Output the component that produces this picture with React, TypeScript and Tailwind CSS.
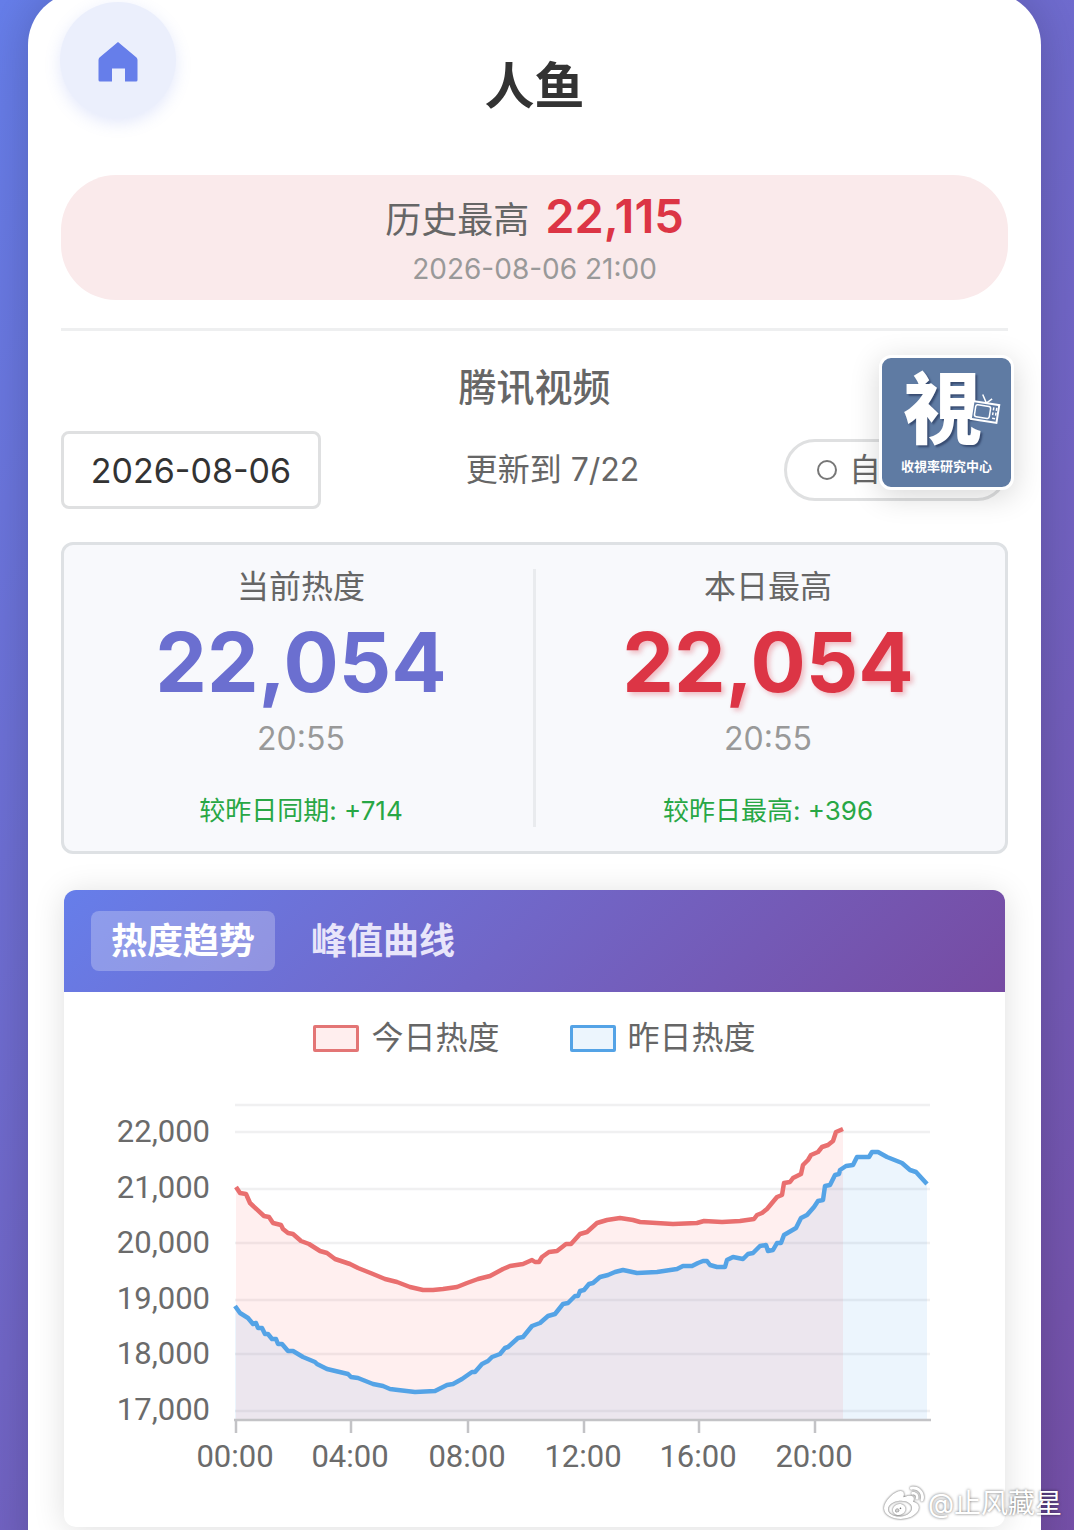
import { useState } from "react";
import { FaWeibo } from "react-icons/fa";

type Point = [number, number];

const today: Point[] = [
  [236, 1187], [240, 1193], [246, 1194], [250, 1203], [264, 1216], [269, 1217], [273, 1223], [281, 1225],
  [283, 1229], [288, 1233], [293, 1234], [301, 1241], [309, 1244], [320, 1251], [327, 1253], [335, 1259],
  [350, 1264], [358, 1268], [373, 1274], [385, 1279], [397, 1282], [410, 1287], [423, 1290], [433, 1290],
  [443, 1289], [457, 1287], [467, 1283], [478, 1279], [490, 1276], [503, 1269], [510, 1266], [523, 1264],
  [532, 1260], [535, 1262], [539, 1262], [542, 1257], [549, 1252], [557, 1251], [566, 1244], [571, 1244],
  [580, 1234], [587, 1232], [597, 1223], [607, 1220], [620, 1218], [633, 1220], [640, 1222], [673, 1224],
  [697, 1223], [704, 1221], [722, 1222], [740, 1221], [754, 1219], [757, 1215], [762, 1213], [767, 1209],
  [777, 1197], [782, 1195], [784, 1183], [790, 1182], [793, 1178], [801, 1174], [803, 1165], [808, 1160],
  [811, 1155], [818, 1152], [822, 1147], [828, 1145], [833, 1141], [836, 1132], [843, 1129],
];

const yesterday: Point[] = [
  [235, 1306], [240, 1313], [248, 1318], [253, 1324], [256, 1323], [258, 1328], [262, 1328], [265, 1334],
  [268, 1334], [272, 1339], [276, 1339], [278, 1344], [282, 1344], [288, 1351], [293, 1351], [303, 1357],
  [315, 1362], [317, 1364], [327, 1369], [348, 1374], [351, 1377], [358, 1378], [373, 1384], [383, 1386],
  [390, 1389], [398, 1390], [415, 1392], [435, 1391], [447, 1385], [453, 1384], [462, 1379], [472, 1372],
  [475, 1372], [482, 1364], [488, 1361], [492, 1357], [500, 1354], [505, 1348], [508, 1347], [518, 1338],
  [523, 1337], [532, 1326], [540, 1323], [548, 1316], [555, 1314], [563, 1304], [568, 1303], [575, 1296],
  [578, 1296], [580, 1291], [584, 1290], [589, 1284], [593, 1283], [600, 1277], [608, 1275], [615, 1272],
  [623, 1270], [637, 1273], [657, 1272], [677, 1269], [683, 1266], [692, 1266], [698, 1263], [703, 1261],
  [707, 1261], [710, 1265], [717, 1267], [725, 1267], [727, 1260], [733, 1257], [743, 1259], [748, 1254],
  [753, 1253], [760, 1246], [766, 1245], [768, 1251], [773, 1250], [777, 1243], [781, 1243], [784, 1235],
  [796, 1228], [801, 1218], [807, 1215], [814, 1207], [818, 1201], [823, 1200], [825, 1186], [830, 1185],
  [835, 1175], [839, 1174], [840, 1170], [846, 1166], [853, 1165], [857, 1157], [869, 1157], [872, 1152],
  [878, 1152], [887, 1157], [902, 1163], [910, 1170], [916, 1172], [927, 1184],
];

const yLabels: [string, number][] = [
  ["22,000", 1132],
  ["21,000", 1189],
  ["20,000", 1243],
  ["19,000", 1300],
  ["18,000", 1354],
  ["17,000", 1411],
];

const xLabels: [string, number][] = [
  ["00:00", 235],
  ["04:00", 350],
  ["08:00", 467],
  ["12:00", 583],
  ["16:00", 698],
  ["20:00", 814],
];

const BASE = 1419;
const line = (p: Point[]) => "M" + p.map(([x, y]) => `${x} ${y}`).join("L");
const area = (p: Point[]) => `${line(p)}L${p[p.length - 1][0]} ${BASE}L${p[0][0]} ${BASE}Z`;

function TrendChart() {
  return (
    <svg viewBox="64 1080 941 447" className="block w-full" role="img" aria-label="热度趋势图">
      <g stroke="#f0f0f1" strokeWidth="2.5">
        <path d="M235 1105H930" />
        {yLabels.map(([t, y]) => (
          <path key={t} d={`M235 ${y}H930`} />
        ))}
      </g>
      <path d={area(today)} fill="#ff6b6b" fillOpacity="0.11" />
      <path d={area(yesterday)} fill="#48a0f0" fillOpacity="0.1" />
      <g stroke="#c3c3c6" strokeWidth="2.5">
        <path d="M234 1420H931" />
        {xLabels.map(([t, x]) => (
          <path key={t} d={`M${x + 1} 1419V1433`} />
        ))}
      </g>
      <g fill="none" strokeWidth="4.5" strokeLinejoin="round">
        <path d={line(yesterday)} stroke="#54a3e6" />
        <path d={line(today)} stroke="#e96f6f" />
      </g>
      <g fill="#6b6b6b" fontSize="31" fontFamily="Roboto, sans-serif">
        {yLabels.map(([t, y], i) => (
          <text key={t} x="210" y={1142 + Math.round(i * 55.6)} textAnchor="end">
            {t}
          </text>
        ))}
        {xLabels.map(([t, x]) => (
          <text key={t} x={x} y="1467" textAnchor="middle">
            {t}
          </text>
        ))}
      </g>
    </svg>
  );
}

function Logo() {
  return (
    <a
      href="#center"
      className="absolute top-[355px] right-[60px] flex size-[135px] flex-col items-center overflow-hidden rounded-xl border-3 border-white bg-[#5f7ba3] text-white shadow-[0_6px_30px_rgba(0,0,0,0.16)]"
    >
      <span className="mt-1.5 mr-2 text-[78px] leading-[92px] font-black [text-shadow:2px_2px_2px_rgba(30,45,80,0.6)]">
        視
      </span>
      <span className="text-[13px] leading-5 font-bold">收視率研究中心</span>
      <svg viewBox="0 0 32 32" className="absolute top-9 right-2.5 size-8" fill="none" stroke="#fff" aria-hidden="true">
        <g transform="rotate(9 16 18)">
          <path d="M11 1 16 9 21 4" strokeWidth="1.5" />
          <rect x="3" y="9" width="26" height="18" fill="#5f7ba3" strokeWidth="2" />
          <rect x="6" y="12" width="15" height="12" rx="2" strokeWidth="1.5" />
          <path d="M24 12v3M24 17v3M27 12v3M27 17v3M24 23h3" strokeWidth="1.5" />
        </g>
      </svg>
    </a>
  );
}

function Stat(props: { title: string; value: string; time: string; diff: string; tone: string }) {
  return (
    <div className="flex flex-1 flex-col items-center">
      <h3 className="text-[32px] leading-9 text-[#666]">{props.title}</h3>
      <p className={"mt-4 text-[82px] leading-[84px] font-bold " + props.tone}>{props.value}</p>
      <p className="mt-3.5 text-[32px] leading-10 text-[#999]">{props.time}</p>
      <p className="mt-9 text-[26px] leading-8 text-[#28a745]">{props.diff}</p>
    </div>
  );
}

export default function App() {
  const [date, setDate] = useState("2026-08-06");
  const [auto, setAuto] = useState(false);
  const [tab, setTab] = useState(0);

  return (
    <div className="relative h-screen min-h-[1530px] overflow-hidden bg-linear-135 from-[#667eea] to-[#764ba2] to-110% pr-[33px] pl-7 font-['Inter','Noto_Sans_CJK_SC',sans-serif]">
      <main className="relative -mt-2 min-h-[1600px] rounded-[53px] bg-white px-[33px] shadow-[0_0_50px_rgba(0,0,0,0.2)]">
        <a
          href="#home"
          aria-label="首页"
          className="absolute top-2.5 left-8 flex size-[116px] items-center justify-center rounded-full bg-[#ebeffc] shadow-[0_5px_16px_rgba(102,126,234,0.18)]"
        >
          <svg viewBox="0 0 40 40" className="mt-1 size-10 fill-[#667eea]" aria-hidden="true">
            <path d="M20 0 38.500 15.500Q39.500 16.500 39.500 18V38Q39.500 39.500 38 39.500H27V26.500H14V39.500H2Q.5 39.500.5 38V18Q.5 16.500 1.500 15.500Z" />
          </svg>
        </a>

        <h1 className="pt-16 text-center text-[50px] leading-[60px] font-bold text-[#333]">人鱼</h1>

        <section className="mt-[59px] flex h-[125px] flex-col items-center rounded-[55px] bg-[#faeaeb] pt-3">
          <p className="flex items-baseline gap-4 leading-[58px]">
            <span className="text-[36px] text-[#666]">历史最高</span>
            <strong className="text-[47px] font-semibold text-[#dc3545]">22,115</strong>
          </p>
          <p className="text-[28px] leading-10 text-[#999]">2026-08-06 21:00</p>
        </section>

        <hr className="mt-7 border-t-3 border-[#eeeff0]" />

        <h2 className="mt-7 text-center text-[38px] leading-[56px] font-medium text-[#666]">腾讯视频</h2>

        <div className="mt-4 flex items-center justify-between">
          <input
            type="text"
            aria-label="日期"
            value={date}
            onChange={(e) => setDate(e.target.value)}
            className="h-[78px] w-[260px] rounded-lg border-3 border-[#dfe0e1] bg-white text-center text-[34px] text-[#333]"
          />
          <p className="text-center text-[32px] leading-10 text-[#666]">更新到 7/22</p>
          <label className="flex h-[62px] w-[224px] items-center gap-3 rounded-full border-3 border-[#dfe0e1] pl-[30px] text-[32px] whitespace-nowrap text-[#666]">
            <input
              type="checkbox"
              checked={auto}
              onChange={(e) => setAuto(e.target.checked)}
              className="size-5 appearance-none rounded-full border-2 border-[#777] checked:bg-[#667eea]"
            />
            自动刷新
          </label>
        </div>

        <section className="mt-[33px] flex gap-[22px] rounded-xl border-3 border-[#dee1e4] bg-[#f8f9fc] px-[27px] py-6">
          <Stat title="当前热度" value="22,054" time="20:55" diff="较昨日同期: +714" tone="text-[#6b6fd0]" />
          <div className="w-[3px] bg-[#e9ebee]" />
          <Stat
            title="本日最高"
            value="22,054"
            time="20:55"
            diff="较昨日最高: +396"
            tone="text-[#dc3545] [text-shadow:3px_3px_5px_rgba(220,53,69,0.3)]"
          />
        </section>

        <section className="mx-[3px] mt-9 overflow-hidden rounded-xl bg-white shadow-[0_3px_32px_rgba(0,0,0,0.13)]">
          <div role="tablist" className="flex h-[102px] items-center gap-4 bg-linear-135 from-[#667eea] to-[#764ba2] px-[27px]">
            {["热度趋势", "峰值曲线"].map((name, i) => (
              <button
                key={name}
                role="tab"
                aria-selected={tab === i}
                onClick={() => setTab(i)}
                className={
                  "h-[60px] rounded-lg px-5 text-[36px] leading-10 font-bold " +
                  (tab === i ? "bg-white/25 text-white" : "text-[#e8e5fa]")
                }
              >
                {name}
              </button>
            ))}
          </div>
          <div className="flex justify-center gap-[70px] pt-6 pb-5 text-[32px] leading-[44px] text-[#666]">
            <span className="flex items-center gap-3">
              <i className="h-[27px] w-[46px] rounded-xs border-3 border-[#e37575] bg-[#ffeeee]" />
              今日热度
            </span>
            <span className="flex items-center gap-3">
              <i className="h-[27px] w-[46px] rounded-xs border-3 border-[#54a3e6] bg-[#ecf5fd]" />
              昨日热度
            </span>
          </div>
          <TrendChart />
        </section>
      </main>

      <Logo />

      <div className="absolute right-3 bottom-1.5 flex items-center gap-1 text-[27px] leading-9 text-white [text-shadow:0_0_3px_rgba(0,0,0,0.6)]">
        <FaWeibo className="size-10 drop-shadow-[0_0_1px_rgba(0,0,0,0.7)]" />
        <span>@止风藏星</span>
      </div>
    </div>
  );
}
